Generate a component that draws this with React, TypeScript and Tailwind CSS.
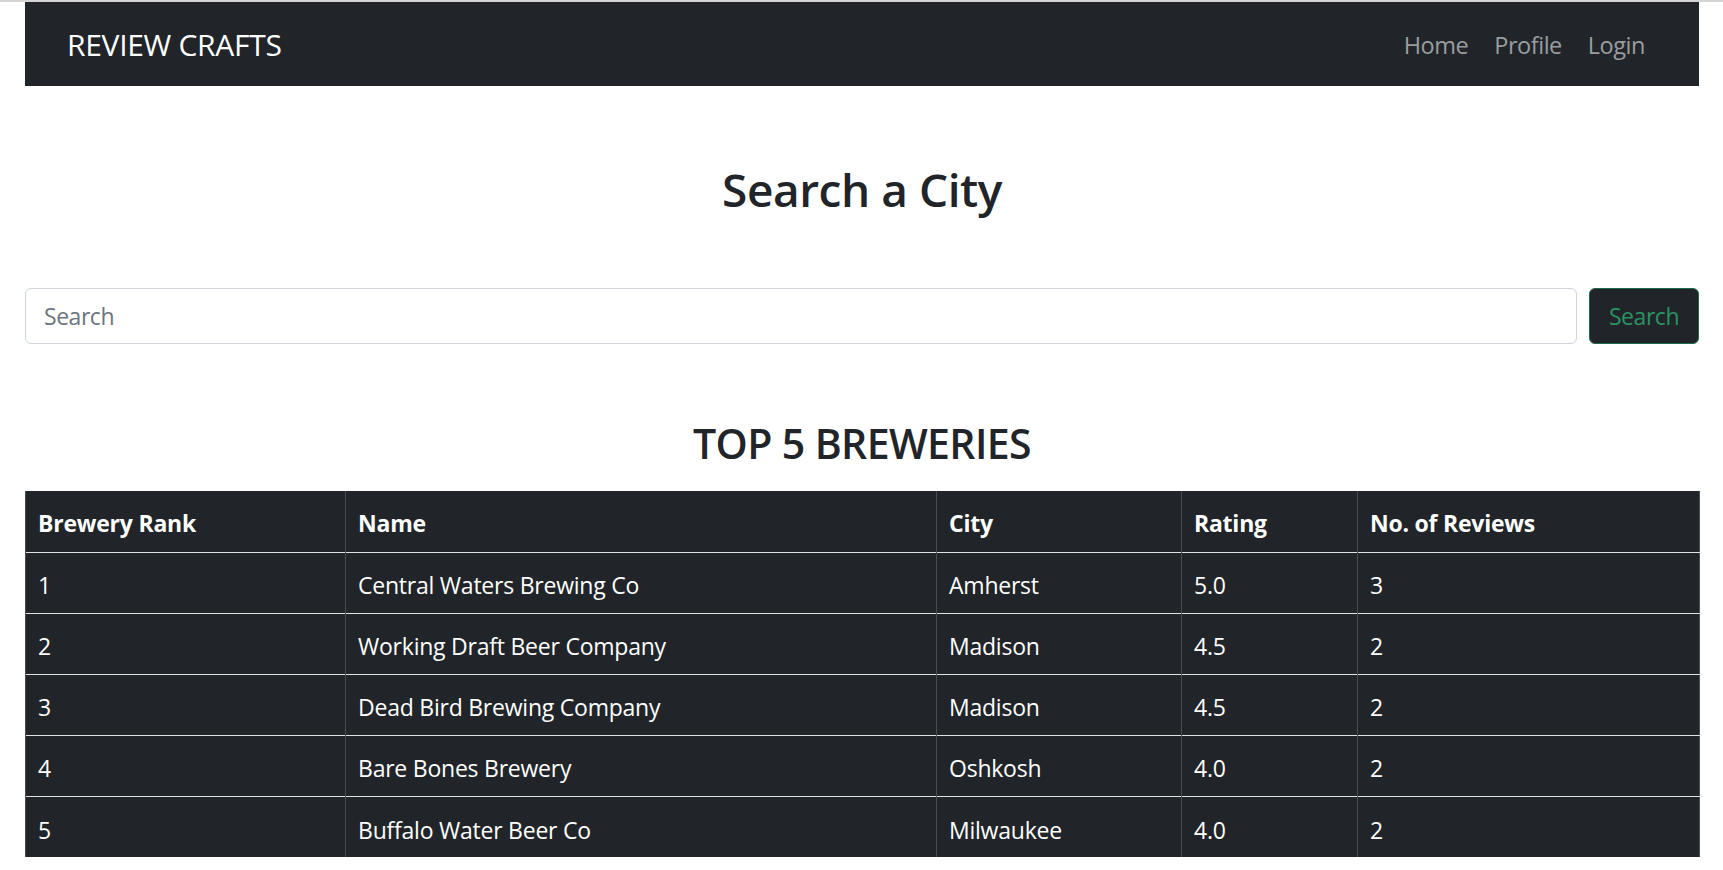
const breweries = [
  { rank: 1, name: 'Central Waters Brewing Co', city: 'Amherst', rating: '5.0', reviews: 3 },
  { rank: 2, name: 'Working Draft Beer Company', city: 'Madison', rating: '4.5', reviews: 2 },
  { rank: 3, name: 'Dead Bird Brewing Company', city: 'Madison', rating: '4.5', reviews: 2 },
  { rank: 4, name: 'Bare Bones Brewery', city: 'Oshkosh', rating: '4.0', reviews: 2 },
  { rank: 5, name: 'Buffalo Water Beer Co', city: 'Milwaukee', rating: '4.0', reviews: 2 },
];

const cols = ['Brewery Rank', 'Name', 'City', 'Rating', 'No. of Reviews'];
const widths = ['w-[320px]', 'w-[591px]', 'w-[245px]', 'w-[176px]', 'w-[342px]'];

export default function App() {
  return (
    <div className="min-h-screen bg-white text-[#212529] font-['Open_Sans',sans-serif] border-t-2 border-[#d4d4d4]">
      <div className="px-[25px] pr-[24px]">
        {/* Navbar */}
        <nav className="h-[84px] bg-[#212529] flex items-center justify-between px-[42px]">
          <a className="text-[30px] text-white tracking-[-0.01em]">REVIEW CRAFTS</a>
          <ul className="flex items-center gap-[2px] pt-[3px]">
            {['Home', 'Profile', 'Login'].map((l) => (
              <li key={l} className="px-[12px] text-[23.5px] text-[#9a9da0] tracking-[-0.02em]">
                {l}
              </li>
            ))}
          </ul>
        </nav>

        <h2 className="mt-[74px] text-center text-[46px] font-semibold leading-[58px] tracking-[-0.01em]">
          Search a City
        </h2>

        {/* Search form */}
        <form className="mt-[70px] flex gap-[12px]">
          <input
            placeholder="Search"
            className="flex-1 h-[56px] border border-[#ced4da] rounded-[6px] px-[18px] text-[23px] placeholder:text-[#6c757d] outline-none tracking-[-0.02em]"
          />
          <button
            type="button"
            className="w-[110px] h-[56px] rounded-[6px] bg-[#212529] border border-[#1e6b47] text-[#2a9362] text-[23px] tracking-[-0.02em]"
          >
            Search
          </button>
        </form>

        <h3 className="mt-[74px] text-center text-[41px] font-semibold leading-[50px] tracking-[-0.015em]">
          TOP 5 BREWERIES
        </h3>

        {/* Table */}
        <table className="mt-[23px] w-full table-fixed bg-[#212529] text-white text-[23px] tracking-[-0.01em] border-r border-[#4a4e52]">
          <thead>
            <tr className="h-[61px] border-b border-[#dfe1e3]">
              {cols.map((c, i) => (
                <th
                  key={c}
                  className={`${widths[i]} text-left font-bold px-[12px] pt-[3px] border-l border-[#4a4e52]`}
                >
                  {c}
                </th>
              ))}
            </tr>
          </thead>
          <tbody>
            {breweries.map((b, i) => (
              <tr key={b.rank} className={`h-[61px] ${i < breweries.length - 1 ? 'border-b border-[#dfe1e3]' : ''}`}>
                <td className="px-[12px] pt-[6px] border-l border-[#4a4e52]">{b.rank}</td>
                <td className="px-[12px] pt-[6px] border-l border-[#4a4e52]">{b.name}</td>
                <td className="px-[12px] pt-[6px] border-l border-[#4a4e52]">{b.city}</td>
                <td className="px-[12px] pt-[6px] border-l border-[#4a4e52]">{b.rating}</td>
                <td className="px-[12px] pt-[6px] border-l border-[#4a4e52]">{b.reviews}</td>
              </tr>
            ))}
          </tbody>
        </table>
      </div>
    </div>
  );
}
